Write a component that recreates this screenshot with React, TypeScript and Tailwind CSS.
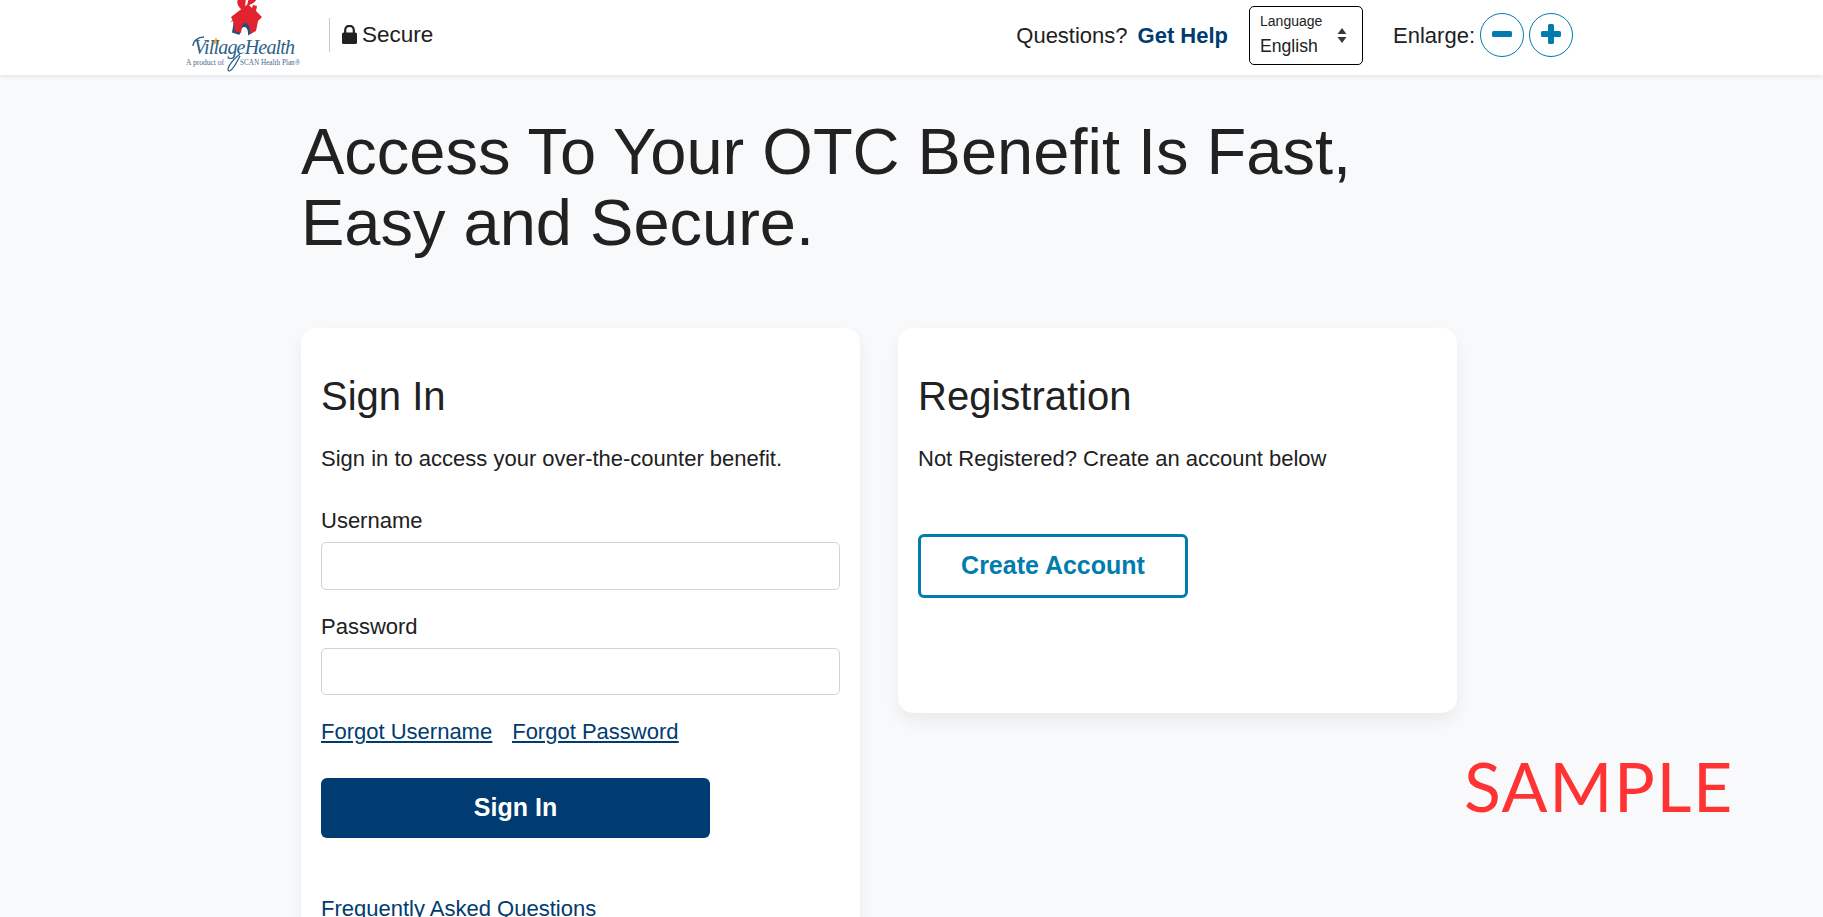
const sans = "font-['Liberation_Sans',Arial,sans-serif]";

function Logo() {
  return (
    <div className="relative w-[118px] h-[75px] shrink-0">
      <svg width="118" height="75" viewBox="0 0 118 75" className="absolute left-0 top-0">
        <path d="M53 33 L47 31 L49 19 L45 21 L61 6 L74 18 L70 21 L68 31 L63 34 C64 24 56 22 55 33 Z" fill="#274f7d" transform="translate(-1 1.5)" />
        <path d="M47 21 L45 17 L62 4 L66 8 L67 5 L71 6 L70 11 L76 17 L72 21 L70 31 L64 34 C65 23 58 20 56 26 L55 33 L49 31 Z" fill="#e0232f" />
        <path d="M56 10 C51 6 50 1 53 -2 L60 -2 L59 7 Z M61 6 L63 -3 L71 -3 C71 1 67 4 61 6 Z" fill="#e0232f" />
        <path d="M18 37 C12 37 7 41 7 46 M54 56 C50 64 46 71 43 71 C40 70 44 62 54 54" fill="none" stroke="#2d6188" strokeWidth="1.3" />
        <path d="M30 37 L31.2 40 L34.5 40 L32 42 L33 45 L30 43.3 L27 45 L28 42 L25.5 40 L28.8 40 Z" fill="#f2a93b" />
      </svg>
      <span className="absolute left-[8px] top-[35px] font-['Liberation_Serif',serif] italic text-[20px] leading-[24px] tracking-[-0.8px] text-[#2d6188] whitespace-nowrap">VillageHealth</span>
      <span className="absolute left-0 top-[59px] font-['Liberation_Serif',serif] text-[7.5px] leading-[8px] text-[#3f6b8f] whitespace-nowrap">A product of</span>
      <span className="absolute left-[54px] top-[59px] font-['Liberation_Serif',serif] text-[7.2px] leading-[8px] text-[#3f6b8f] whitespace-nowrap">SCAN Health Plan®</span>
    </div>
  );
}

function Field({ label, className, inputClass }: { label: string; className?: string; inputClass: string }) {
  return (
    <div className={className}>
      <label className="block text-[22px] leading-[33px]">{label}</label>
      <input className={`block mt-[5px] w-full bg-white border border-[#ced4da] rounded-[5px] ${inputClass}`} />
    </div>
  );
}

export default function App() {
  return (
    <div className={`${sans} relative h-screen overflow-hidden bg-[#f8f9fa] text-[#212121]`}>
      <header className="relative z-10 h-[75px] bg-white shadow-[0_2px_4px_rgba(0,0,0,0.075)] flex items-center pl-[186px] pb-[5px]">
        <div className="self-start"><Logo /></div>
        <div className="ml-[25px] w-px h-[34px] bg-[#c8c8c8] shrink-0" />
        <div className="ml-[12px] flex items-center gap-[5px] text-[22.5px] leading-[34px]">
          <svg width="15" height="19" viewBox="0 0 15 19" className="mb-[2px]">
            <path d="M3.2 8V5.200C3.200 2.700 5 .8 7.500.8s4.300 1.900 4.300 4.400V8" fill="none" stroke="#212121" strokeWidth="2.2" />
            <rect x="0" y="7.500" width="15" height="11.500" rx="1.600" fill="#212121" />
          </svg>
          <span>Secure</span>
        </div>
        <div className="ml-auto mr-[250px] flex items-center">
          <span className="text-[22px] leading-[33px]">Questions?</span>
          <a className="ml-[10px] text-[22px] leading-[33px] font-bold text-[#003b71]">Get Help</a>
          <div className="ml-[21px] w-[114px] h-[59px] border border-black rounded-[5px] bg-white pl-[10px] pt-[4px] relative">
            <div className="text-[14px] leading-[20px]">Language</div>
            <div className="mt-[2px] text-[17.6px] leading-[26px]">English</div>
            <svg width="10" height="15" viewBox="0 0 10 15" className="absolute right-[15px] top-[21px]">
              <path d="M5 0 L9.500 6 H.5 Z M5 15 L.5 9 H9.500 Z" fill="#343a40" />
            </svg>
          </div>
          <span className="ml-[30px] text-[22px] leading-[33px]">Enlarge:</span>
          <button className="ml-[5px] w-[44px] h-[44px] rounded-full border border-[#007cad] bg-white flex items-center justify-center">
            <svg width="20" height="20" viewBox="0 0 20 20" className="mb-[2px]"><rect x="0" y="7" width="20" height="6" rx="1.500" fill="#007cad" /></svg>
          </button>
          <button className="ml-[5px] w-[44px] h-[44px] rounded-full border border-[#007cad] bg-white flex items-center justify-center">
            <svg width="20" height="20" viewBox="0 0 20 20" className="mb-[2px]"><path d="M7 1.500A1.500 1.500 0 0 1 8.500 0h3A1.500 1.500 0 0 1 13 1.500V7h5.500A1.500 1.500 0 0 1 20 8.500v3a1.500 1.500 0 0 1-1.500 1.500H13v5.500a1.500 1.500 0 0 1-1.500 1.500h-3A1.500 1.500 0 0 1 7 18.500V13H1.500A1.500 1.500 0 0 1 0 11.500v-3A1.500 1.500 0 0 1 1.500 7H7z" fill="#007cad" /></svg>
          </button>
        </div>
      </header>

      <main className="pl-[301px] w-[1160px] box-content">
        <h1 className="pt-[41px] text-[65px] leading-[71px] font-normal">
          Access To Your OTC Benefit Is Fast,<br />Easy and Secure.
        </h1>
        <div className="mt-[70px] flex items-start gap-[38px]">
          <section className="w-[559px] h-[700px] shrink-0 bg-white rounded-[15px] shadow-[0_8px_16px_rgba(0,0,0,0.06)] px-[20px] pt-[44px]">
            <h2 className="text-[40px] leading-[48px] font-normal">Sign In</h2>
            <p className="mt-[22px] text-[22px] leading-[33px]">Sign in to access your over-the-counter benefit.</p>
            <Field label="Username" className="mt-[29px]" inputClass="h-[48px]" />
            <Field label="Password" className="mt-[20px]" inputClass="h-[47px]" />
            <div className="mt-[20px] flex gap-[20px] text-[22px] leading-[33px] text-[#003b71] underline">
              <a>Forgot Username</a>
              <a>Forgot Password</a>
            </div>
            <button className="mt-[30px] block w-[389px] h-[60px] rounded-[6px] bg-[#003b71] text-white text-[25px] font-bold">Sign In</button>
            <a className="block mt-[54px] text-[22px] leading-[33px] text-[#003b71]">Frequently Asked Questions</a>
          </section>
          <section className="w-[559px] h-[385px] shrink-0 bg-white rounded-[15px] shadow-[0_8px_16px_rgba(0,0,0,0.06)] px-[20px] pt-[44px]">
            <h2 className="text-[40px] leading-[48px] font-normal">Registration</h2>
            <p className="mt-[22px] text-[22px] leading-[33px]">Not Registered? Create an account below</p>
            <button className="mt-[59px] block w-[270px] h-[64px] rounded-[6px] border-[3px] border-[#007cad] bg-white text-[#007cad] text-[25px] font-bold">Create Account</button>
          </section>
        </div>
      </main>

      <div className="absolute left-[1464px] top-[746px] font-['Lato',sans-serif] text-[68px] leading-[80px] tracking-[1.6px] text-[#ff3333] whitespace-nowrap">SAMPLE</div>
    </div>
  );
}
